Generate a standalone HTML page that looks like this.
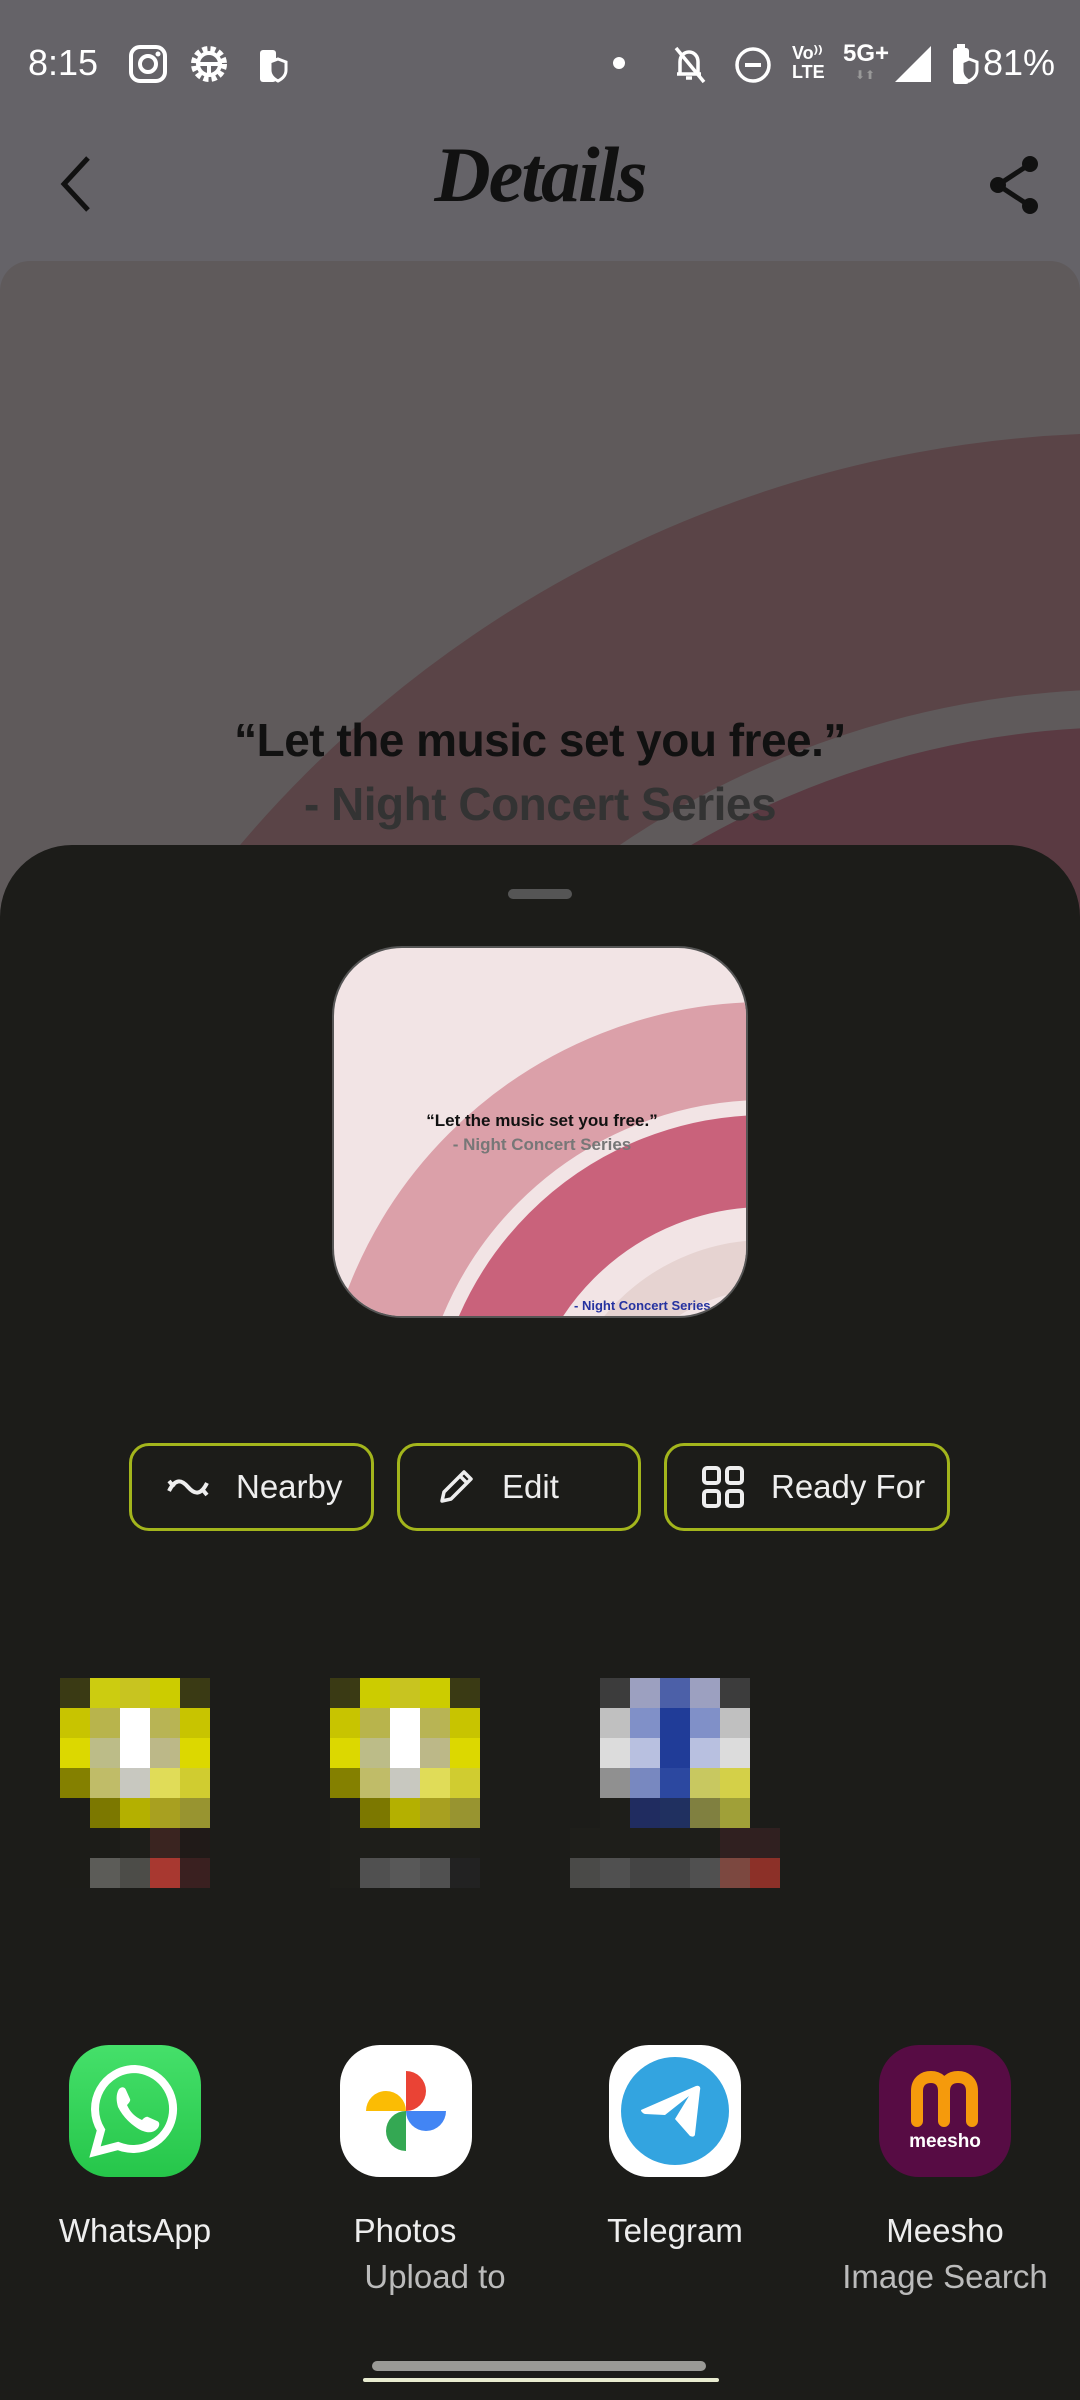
<!DOCTYPE html>
<html style="width:1080px;height:2400px;overflow:hidden"><head><meta charset="utf-8"><style>
*{margin:0;padding:0;box-sizing:border-box}
body{width:1080px;height:2400px;background:#656368;position:relative;overflow:hidden;font-family:"Liberation Sans",sans-serif}
.abs{position:absolute}
.st{color:#fff;font-size:36px;top:42px}
.sheet{left:0;top:845px;width:1080px;height:1555px;background:#1c1c19;border-radius:72px 72px 0 0}
.btn{position:absolute;top:1443px;height:88px;border:3px solid #a3b51c;border-radius:20px;color:#eee;font-size:33px;display:flex;align-items:center}
.btn svg{margin-right:26px}
.app{position:absolute;top:2045px;width:132px;height:132px;border-radius:40px;overflow:hidden}
.lbl{position:absolute;top:2212px;width:270px;text-align:center;color:#eee;font-size:33px}
.sub{position:absolute;top:2258px;width:270px;text-align:center;color:#bbb;font-size:33px}
.g{display:grid;grid-auto-rows:30px}
</style></head><body>
<!-- status bar -->
<div class="abs st" style="left:28px">8:15</div>
<svg class="abs" style="left:128px;top:44px" width="40" height="40" viewBox="0 0 40 40"><rect x="3" y="3" width="34" height="34" rx="9" fill="none" stroke="#fff" stroke-width="4"/><circle cx="20" cy="20" r="8" fill="none" stroke="#fff" stroke-width="4"/><circle cx="30" cy="10" r="2.5" fill="#fff"/></svg>
<svg class="abs" style="left:188px;top:42px" width="42" height="44" viewBox="0 0 42 44"><circle cx="21" cy="22" r="15" fill="none" stroke="#fff" stroke-width="6" stroke-dasharray="5 3"/><circle cx="21" cy="22" r="11" fill="none" stroke="#fff" stroke-width="4"/><path d="M10 22H32M21 22V33" stroke="#fff" stroke-width="4"/></svg>
<svg class="abs" style="left:258px;top:46px" width="30" height="38" viewBox="0 0 30 38"><rect x="2" y="4" width="16" height="32" rx="3" fill="#fff"/><path d="M12 16l8-3 8 3v8c0 6-4 9-8 11-4-2-8-5-8-11z" fill="#656368" stroke="#fff" stroke-width="3"/></svg>
<div class="abs" style="left:613px;top:57px;width:12px;height:12px;border-radius:6px;background:#fff"></div>
<svg class="abs" style="left:672px;top:44px" width="34" height="40" viewBox="0 0 34 40"><path d="M8 30V18c0-6 4-10 9-10s9 4 9 10v12H5h24M14 34h6" fill="none" stroke="#fff" stroke-width="3.5"/><path d="M4 4l28 34" stroke="#fff" stroke-width="3.5"/></svg>
<svg class="abs" style="left:734px;top:46px" width="38" height="38" viewBox="0 0 38 38"><circle cx="19" cy="19" r="16" fill="none" stroke="#fff" stroke-width="3.5"/><path d="M11 19H27" stroke="#fff" stroke-width="4"/></svg>
<div class="abs" style="left:792px;top:44px;color:#fff;font-size:18px;line-height:19px;font-weight:bold">Vo⁾⁾<br>LTE</div>
<div class="abs" style="left:843px;top:40px;color:#fff;font-size:24px;font-weight:bold">5G+</div>
<div class="abs" style="left:855px;top:68px;color:#999;font-size:12px">⬇⬆</div>
<svg class="abs" style="left:895px;top:46px" width="36" height="36"><path d="M0 36L36 0V36Z" fill="#fff"/></svg>
<svg class="abs" style="left:950px;top:42px" width="30" height="44" viewBox="0 0 30 44"><rect x="3" y="6" width="16" height="36" rx="3" fill="#fff"/><rect x="7" y="2" width="8" height="5" fill="#fff"/><path d="M12 20l7-3 8 3v8c0 6-4 9-8 11-4-2-7-5-7-11z" fill="#656368" stroke="#fff" stroke-width="3"/></svg>
<div class="abs st" style="left:983px">81%</div>

<!-- header -->
<svg class="abs" style="left:56px;top:154px" width="40" height="60" viewBox="0 0 40 60"><path d="M32 4L8 30L32 56" fill="none" stroke="#111" stroke-width="5"/></svg>
<div class="abs" style="left:430px;top:130px;width:220px;text-align:center;font-family:'Liberation Serif',serif;font-style:italic;font-weight:bold;font-size:78px;color:#111;letter-spacing:-2px">Details</div>
<svg class="abs" style="left:986px;top:154px" width="56" height="62" viewBox="0 0 56 62"><circle cx="44" cy="10" r="8" fill="#111"/><circle cx="12" cy="31" r="8" fill="#111"/><circle cx="44" cy="52" r="8" fill="#111"/><path d="M44 10L12 31L44 52" fill="none" stroke="#111" stroke-width="5"/></svg>

<!-- main card -->
<div class="abs" style="left:0;top:261px;width:1080px;height:700px;background:#5f5a5b;border-radius:30px;overflow:hidden">
<svg width="1080" height="700" style="position:absolute;left:0;top:0"><g transform="translate(0,-261)">
<circle cx="1129" cy="1598" r="1037" fill="none" stroke="#5a4447" stroke-width="256"/>
<circle cx="1129" cy="1598" r="751" fill="none" stroke="#5a3a42" stroke-width="240"/>
</g></svg>
<div class="abs" style="left:0;top:452px;width:1080px;text-align:center;font-size:46px;font-weight:bold;color:#111;letter-spacing:-0.5px">“Let the music set you free.”</div>
<div class="abs" style="left:0;top:516px;width:1080px;text-align:center;font-size:46px;font-weight:bold;color:#333;letter-spacing:-0.5px">- Night Concert Series</div>
</div>

<!-- sheet -->
<div class="abs sheet"></div>
<div class="abs" style="left:508px;top:889px;width:64px;height:10px;border-radius:5px;background:#555"></div>

<!-- preview -->
<div class="abs" style="left:332px;top:946px;width:416px;height:372px;border-radius:70px;overflow:hidden;background:#f2e4e5;border:2px solid #555">
<svg width="416" height="372" style="position:absolute;left:-2px;top:-2px">
<circle cx="434" cy="504" r="399" fill="none" stroke="#dba0a9" stroke-width="98"/>
<circle cx="434" cy="504" r="289" fill="none" stroke="#c9627b" stroke-width="92"/>
<circle cx="434" cy="504" r="185" fill="none" stroke="#e6d3d1" stroke-width="50"/>
</svg>
<div class="abs" style="left:0;top:163px;width:416px;text-align:center;font-size:17px;font-weight:bold;color:#111">“Let the music set you free.”</div>
<div class="abs" style="left:0;top:187px;width:416px;text-align:center;font-size:17px;font-weight:bold;color:#777">- Night Concert Series</div>
<div class="abs" style="left:240px;top:350px;width:300px;font-size:13px;font-weight:bold;color:#2633a0">- Night Concert Series</div>
</div>

<!-- buttons -->
<div class="btn" style="left:129px;width:245px;padding-left:34px"><svg width="44" height="24" viewBox="0 0 44 24"><path d="M3 16c6-12 12-12 19-4s13 8 19-4M3 6l5 6M36 14l5 6" fill="none" stroke="#eee" stroke-width="4"/></svg>Nearby</div>
<div class="btn" style="left:397px;width:244px;padding-left:36px"><svg width="40" height="40" viewBox="0 0 40 40"><path d="M6 34l2-9L28 5l7 7-20 20zM24 9l7 7" fill="none" stroke="#eee" stroke-width="3.5" stroke-linejoin="round"/></svg>Edit</div>
<div class="btn" style="left:664px;width:286px;padding-left:34px"><svg width="44" height="44" viewBox="0 0 44 44"><g fill="none" stroke="#eee" stroke-width="4"><rect x="3" y="3" width="15" height="15" rx="3"/><rect x="26" y="3" width="15" height="15" rx="3"/><rect x="3" y="26" width="15" height="15" rx="3"/><rect x="26" y="26" width="15" height="15" rx="3"/></g></svg>Ready For</div>

<!-- pixelated blobs -->
<div class="abs" style="left:60px;top:1678px">
<div class="g" style="grid-template-columns:repeat(5,30px)">
<i style="background:#3a3a14"></i><i style="background:#cccc10"></i><i style="background:#c8c420"></i><i style="background:#cccc00"></i><i style="background:#3a3a14"></i>
<i style="background:#c8c400"></i><i style="background:#b8b44c"></i><i style="background:#fff"></i><i style="background:#b8b454"></i><i style="background:#c8c400"></i>
<i style="background:#dcd800"></i><i style="background:#bcbc88"></i><i style="background:#fff"></i><i style="background:#bcb888"></i><i style="background:#dcd800"></i>
<i style="background:#848000"></i><i style="background:#c0bc68"></i><i style="background:#c8c8c0"></i><i style="background:#e0dc58"></i><i style="background:#d0cc30"></i>
<i style="background:#1c1c18"></i><i style="background:#7c7800"></i><i style="background:#b4b000"></i><i style="background:#a8a020"></i><i style="background:#989430"></i>
<i style="background:#1c1c18"></i><i style="background:#1c1c18"></i><i style="background:#1e1e1a"></i><i style="background:#3a2420"></i><i style="background:#201a18"></i>
<i style="background:#1c1c18"></i><i style="background:#5c5c58"></i><i style="background:#4c4c48"></i><i style="background:#a83830"></i><i style="background:#3a2020"></i>
</div></div>
<div class="abs" style="left:330px;top:1678px">
<div class="g" style="grid-template-columns:repeat(5,30px)">
<i style="background:#3a3a14"></i><i style="background:#cccc00"></i><i style="background:#c8c420"></i><i style="background:#cccc00"></i><i style="background:#3a3a14"></i>
<i style="background:#c8c400"></i><i style="background:#b8b44c"></i><i style="background:#fff"></i><i style="background:#b8b454"></i><i style="background:#c8c400"></i>
<i style="background:#dcd800"></i><i style="background:#bcbc88"></i><i style="background:#fff"></i><i style="background:#bcb888"></i><i style="background:#dcd800"></i>
<i style="background:#848000"></i><i style="background:#c0bc68"></i><i style="background:#c8c8c0"></i><i style="background:#e0dc58"></i><i style="background:#d0cc30"></i>
<i style="background:#1e1e1a"></i><i style="background:#7c7800"></i><i style="background:#b4b000"></i><i style="background:#a8a020"></i><i style="background:#989430"></i>
<i style="background:#1e1e1a"></i><i style="background:#1e1e1a"></i><i style="background:#1e1e1a"></i><i style="background:#1e1e1a"></i><i style="background:#1e1e1a"></i>
<i style="background:#1e1e1a"></i><i style="background:#505050"></i><i style="background:#585858"></i><i style="background:#505050"></i><i style="background:#222"></i>
</div></div>
<div class="abs" style="left:570px;top:1678px">
<div class="g" style="grid-template-columns:repeat(7,30px)">
<i></i><i style="background:#3c3c3c"></i><i style="background:#9ca0c0"></i><i style="background:#4c60a8"></i><i style="background:#9ca0c0"></i><i style="background:#3c3c3c"></i><i></i>
<i></i><i style="background:#c0c0c0"></i><i style="background:#8090c8"></i><i style="background:#203c98"></i><i style="background:#8090c8"></i><i style="background:#c0c0c0"></i><i></i>
<i></i><i style="background:#dcdcdc"></i><i style="background:#b8c0e0"></i><i style="background:#203c98"></i><i style="background:#b8c0e0"></i><i style="background:#dcdcdc"></i><i></i>
<i></i><i style="background:#909090"></i><i style="background:#7888c0"></i><i style="background:#2c48a0"></i><i style="background:#c8c860"></i><i style="background:#d4d048"></i><i></i>
<i></i><i style="background:#1e1e1a"></i><i style="background:#202c60"></i><i style="background:#203060"></i><i style="background:#808040"></i><i style="background:#a0a038"></i><i></i>
<i style="background:#1e1e1a"></i><i style="background:#1e1e1a"></i><i style="background:#1e1e1a"></i><i style="background:#1e1e1a"></i><i style="background:#1e1e1a"></i><i style="background:#302020"></i><i style="background:#302020"></i>
<i style="background:#4a4a48"></i><i style="background:#505050"></i><i style="background:#444"></i><i style="background:#444"></i><i style="background:#505050"></i><i style="background:#7c4840"></i><i style="background:#8c3028"></i>
</div></div>

<!-- apps -->
<div class="app" style="left:69px;background:linear-gradient(#45e06a,#26c64a)">
<svg width="132" height="132" viewBox="0 0 132 132"><path d="M66 24a40 40 0 0 0-34 61l-6 22 23-6a40 40 0 1 0 17-77z" fill="none" stroke="#fff" stroke-width="8"/><path d="M50 44c3-3 6-2 7 1l4 9c1 2-2 5-3 6 3 7 8 12 15 15 1-1 4-4 6-3l9 4c3 1 3 5 0 8-5 5-12 4-20-1-9-6-15-13-19-21-2-7-2-13 1-18z" fill="#fff"/></svg></div>
<div class="app" style="left:340px;background:#fff">
<svg width="132" height="132" viewBox="0 0 132 132"><path d="M66 66V26A20 20 0 0 1 66 66Z" fill="#ea4335"/><path d="M66 66H106A20 20 0 0 1 66 66Z" fill="#4285f4"/><path d="M66 66V106A20 20 0 0 1 66 66Z" fill="#34a853"/><path d="M66 66H26A20 20 0 0 1 66 66Z" fill="#fbbc04"/></svg></div>
<div class="app" style="left:609px;background:#fff">
<svg width="132" height="132" viewBox="0 0 132 132"><circle cx="66" cy="66" r="54" fill="#33a4e0"/><path d="M32 65l55-24c3-1 5 1 4 4l-5 44c0 3-3 3-5 2l-15-17 14-23-24 19-20-1c-3-1-4-3-4-4z" fill="#fff"/></svg></div>
<div class="app" style="left:879px;background:#570c44">
<svg width="132" height="132" viewBox="0 0 132 132"><path d="M38 76V46m0 0c0-10 7-14 14-14s13 4 13 14v30M65 46c0-10 7-14 14-14s14 4 14 14v30" fill="none" stroke="#f59a0c" stroke-width="12" stroke-linecap="round"/><text x="66" y="102" text-anchor="middle" font-family="Liberation Sans" font-weight="bold" font-size="19" fill="#fff">meesho</text></svg></div>

<div class="lbl" style="left:0">WhatsApp</div>
<div class="lbl" style="left:270px">Photos</div>
<div class="sub" style="left:300px">Upload to</div>
<div class="lbl" style="left:540px">Telegram</div>
<div class="lbl" style="left:810px">Meesho</div>
<div class="sub" style="left:810px">Image Search</div>

<div class="abs" style="left:372px;top:2361px;width:334px;height:10px;border-radius:5px;background:#9a9a96"></div>
<div class="abs" style="left:363px;top:2378px;width:356px;height:4px;border-radius:2px;background:#e8ecd0"></div>
</body></html>
